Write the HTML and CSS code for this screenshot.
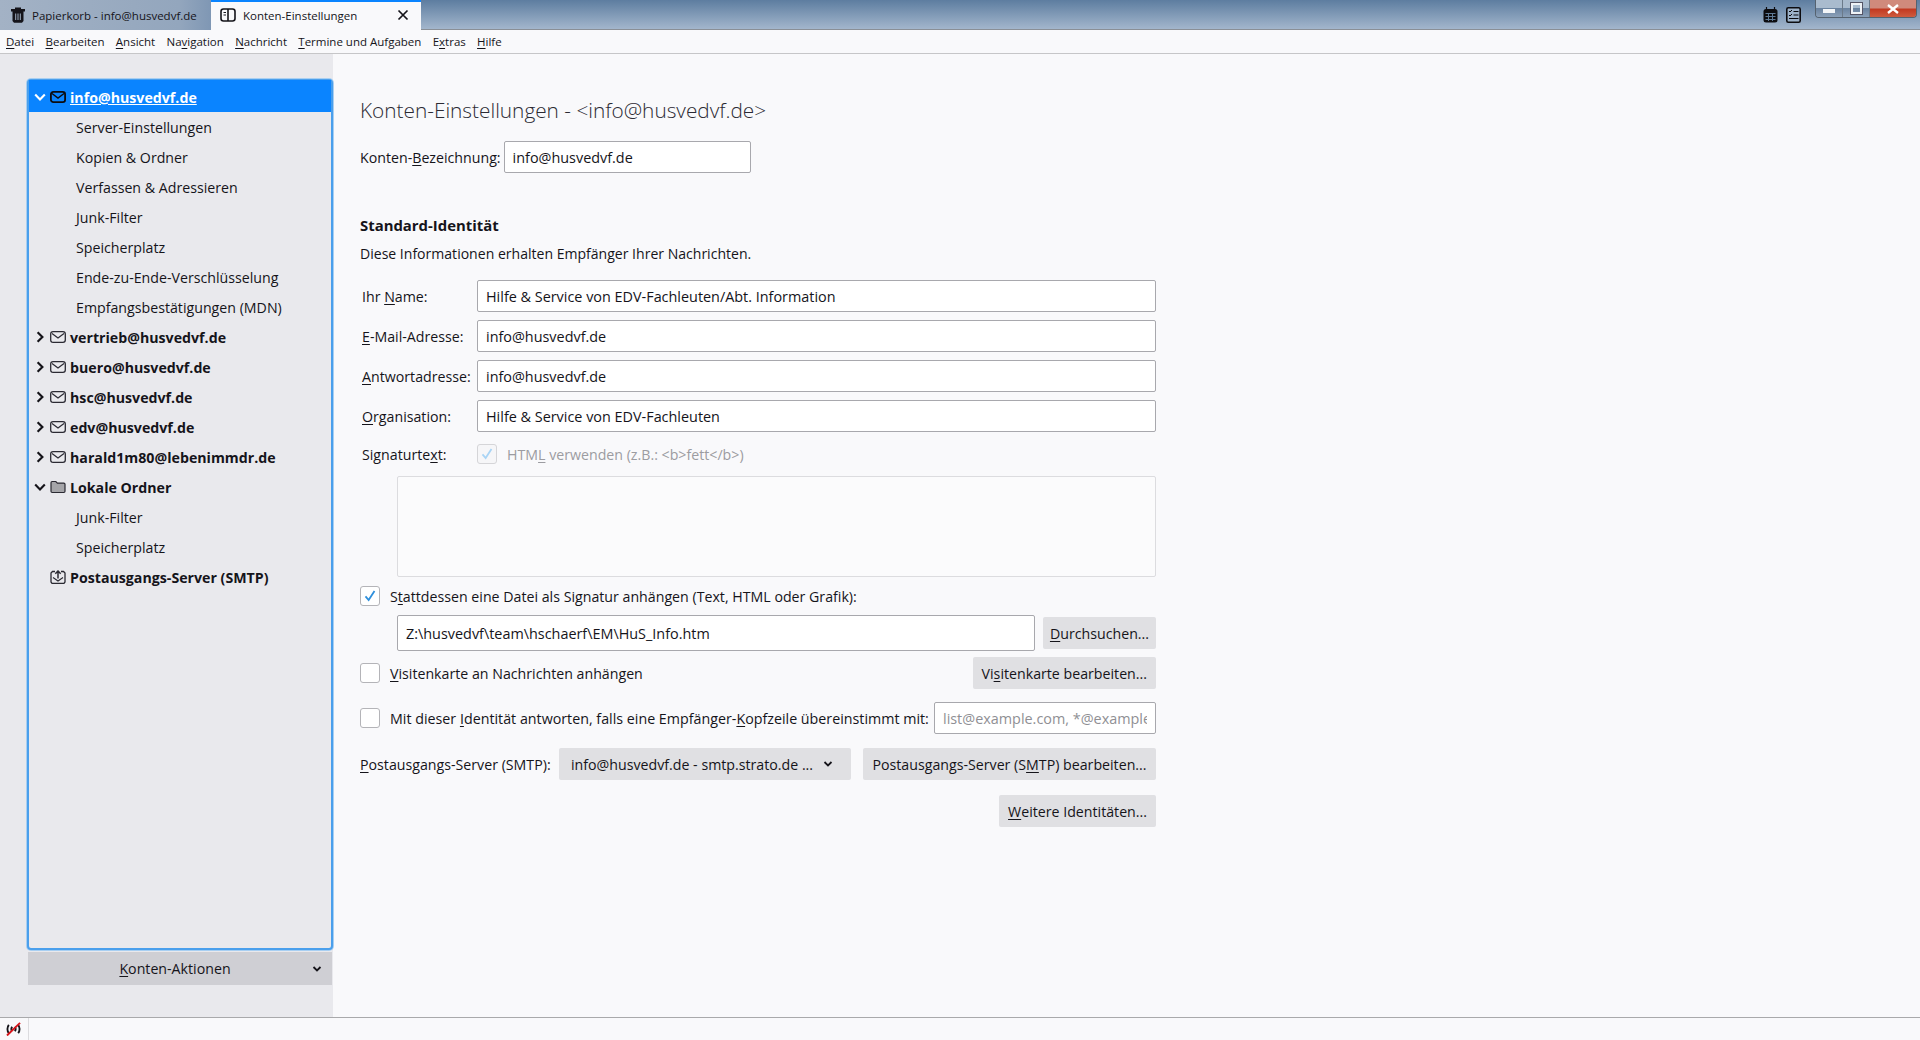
FILE: index.html
```html
<!DOCTYPE html>
<html lang="de">
<head>
<meta charset="utf-8">
<title>Konten-Einstellungen</title>
<link rel="stylesheet" href="styles.css">
</head>
<body>
<div class="app">
  <header class="titlebar">
    <div class="tab">
      <svg class="tab-icon" viewBox="0 0 16 16"><path d="M5 2V.5h6V2h4v2.500h-1.500V14l-1.500 1.700H4L2.500 14V4.500H1V2z" fill="#15141a"/><path d="M5.700 6.500v6.500M8 6.500v6.500M10.300 6.500v6.500" stroke="#a0afc2" stroke-width="1"/></svg>
      <span>Papierkorb - info@husvedvf.de</span>
    </div>
    <div class="tab tab-active">
      <svg class="tab-icon" viewBox="0 0 16 16"><rect x="1" y="2" width="14" height="12" rx="2.500" fill="none" stroke="#15141a" stroke-width="1.600"/><path d="M8 2v12" stroke="#15141a" stroke-width="1.600"/><path d="M3.500 5.500h2.500M3.500 8h2.500" stroke="#15141a" stroke-width="1.200"/></svg>
      <span class="tab-label">Konten-Einstellungen</span>
      <svg class="tab-close" viewBox="0 0 12 12"><path d="M1.500 1.500l9 9M10.500 1.500l-9 9" stroke="#15141a" stroke-width="1.700"/></svg>
    </div>
    <div class="title-spacer"></div>
    <svg class="tool-icon" viewBox="0 0 15 16"><path d="M3.500 0v3M11.500 0v3" stroke="#0c0c10" stroke-width="1.200"/><rect x="0.500" y="2" width="14" height="13.500" rx="2.500" fill="#0c0c10"/><path d="M2.500 6.500h10M2.500 9.500h10M2.500 12.500h10M5.500 6v8M9.500 6v8" stroke="#5d7894" stroke-width="1"/></svg>
    <svg class="tool-icon tool-task" viewBox="0 0 15 16"><rect x="0.800" y="0.800" width="13.400" height="14.400" rx="1.500" fill="#9db2c9" stroke="#0c0c10" stroke-width="1.600"/><path d="M3 4l1 1 2-2M3 8l1 1 2-2" stroke="#0c0c10" fill="none"/><path d="M7.500 4.500h5M7.500 8h5M3 11.500h9.500" stroke="#0c0c10" stroke-width="1.200"/></svg>
    <div class="winctl">
      <div class="wbtn wbtn-min"><i></i></div>
      <div class="wbtn wbtn-max"><i></i></div>
      <div class="wbtn wbtn-close"><svg viewBox="0 0 14 10" width="14" height="10"><path d="M2 1l10 8M12 1L2 9" stroke="#fff" stroke-width="2.400"/></svg></div>
    </div>
  </header>

  <nav class="menubar">
    <span><u>D</u>atei</span><span><u>B</u>earbeiten</span><span><u>A</u>nsicht</span><span>Na<u>v</u>igation</span><span><u>N</u>achricht</span><span><u>T</u>ermine und Aufgaben</span><span>E<u>x</u>tras</span><span><u>H</u>ilfe</span>
  </nav>

  <div class="body">
    <aside class="sidebar">
      <div class="tree">
        <div class="row row-selected">
          <svg class="chev" viewBox="0 0 10 10"><path d="M1 3l4 4 4-4" fill="none" stroke="#fff" stroke-width="1.800"/></svg>
          <svg class="ico" viewBox="0 0 16 12"><rect x="0.900" y="0.900" width="14.200" height="10.200" rx="2.400" fill="none" stroke="#0c0c10" stroke-width="1.800"/><path d="M2 2.500l6 4.500 6-4.500" fill="none" stroke="#0c0c10" stroke-width="1.400"/></svg>
          <span class="acct acct-link">info@husvedvf.de</span>
        </div>
        <div class="row sub">Server-Einstellungen</div>
        <div class="row sub">Kopien &amp; Ordner</div>
        <div class="row sub">Verfassen &amp; Adressieren</div>
        <div class="row sub">Junk-Filter</div>
        <div class="row sub">Speicherplatz</div>
        <div class="row sub">Ende-zu-Ende-Verschlüsselung</div>
        <div class="row sub">Empfangsbestätigungen (MDN)</div>
        <div class="row">
          <svg class="chev" viewBox="0 0 10 10"><path d="M3 1l4 4-4 4" fill="none" stroke="#15141a" stroke-width="1.800"/></svg>
          <svg class="ico" viewBox="0 0 16 12"><rect x="0.700" y="0.700" width="14.600" height="10.600" rx="2.400" fill="none" stroke="#2b2a33" stroke-width="1.300"/><path d="M2 2.500l6 4.500 6-4.500" fill="none" stroke="#2b2a33" stroke-width="1.200"/></svg>
          <span class="acct">vertrieb@husvedvf.de</span>
        </div>
        <div class="row">
          <svg class="chev" viewBox="0 0 10 10"><path d="M3 1l4 4-4 4" fill="none" stroke="#15141a" stroke-width="1.800"/></svg>
          <svg class="ico" viewBox="0 0 16 12"><rect x="0.700" y="0.700" width="14.600" height="10.600" rx="2.400" fill="none" stroke="#2b2a33" stroke-width="1.300"/><path d="M2 2.500l6 4.500 6-4.500" fill="none" stroke="#2b2a33" stroke-width="1.200"/></svg>
          <span class="acct">buero@husvedvf.de</span>
        </div>
        <div class="row">
          <svg class="chev" viewBox="0 0 10 10"><path d="M3 1l4 4-4 4" fill="none" stroke="#15141a" stroke-width="1.800"/></svg>
          <svg class="ico" viewBox="0 0 16 12"><rect x="0.700" y="0.700" width="14.600" height="10.600" rx="2.400" fill="none" stroke="#2b2a33" stroke-width="1.300"/><path d="M2 2.500l6 4.500 6-4.500" fill="none" stroke="#2b2a33" stroke-width="1.200"/></svg>
          <span class="acct">hsc@husvedvf.de</span>
        </div>
        <div class="row">
          <svg class="chev" viewBox="0 0 10 10"><path d="M3 1l4 4-4 4" fill="none" stroke="#15141a" stroke-width="1.800"/></svg>
          <svg class="ico" viewBox="0 0 16 12"><rect x="0.700" y="0.700" width="14.600" height="10.600" rx="2.400" fill="none" stroke="#2b2a33" stroke-width="1.300"/><path d="M2 2.500l6 4.500 6-4.500" fill="none" stroke="#2b2a33" stroke-width="1.200"/></svg>
          <span class="acct">edv@husvedvf.de</span>
        </div>
        <div class="row">
          <svg class="chev" viewBox="0 0 10 10"><path d="M3 1l4 4-4 4" fill="none" stroke="#15141a" stroke-width="1.800"/></svg>
          <svg class="ico" viewBox="0 0 16 12"><rect x="0.700" y="0.700" width="14.600" height="10.600" rx="2.400" fill="none" stroke="#2b2a33" stroke-width="1.300"/><path d="M2 2.500l6 4.500 6-4.500" fill="none" stroke="#2b2a33" stroke-width="1.200"/></svg>
          <span class="acct">harald1m80@lebenimmdr.de</span>
        </div>
        <div class="row">
          <svg class="chev" viewBox="0 0 10 10"><path d="M1 3l4 4 4-4" fill="none" stroke="#15141a" stroke-width="1.800"/></svg>
          <svg class="ico ico-folder" viewBox="0 0 16 13"><path d="M1 3V2.200C1 1.500 1.500 1 2.200 1h3.600l1.600 1.600h6.400c.7 0 1.200.5 1.200 1.200v7c0 .7-.5 1.200-1.200 1.200H2.200C1.500 12 1 11.500 1 10.800z" fill="#a5a5a9" stroke="#2b2a33" stroke-width="1.200"/></svg>
          <span class="acct">Lokale Ordner</span>
        </div>
        <div class="row sub">Junk-Filter</div>
        <div class="row sub">Speicherplatz</div>
        <div class="row">
          <span class="chev"></span>
          <svg class="ico ico-folder" viewBox="0 0 16 14"><path d="M5 1.500H2.500l-1.500 1.500v9l1 1.300h12l1-1.300v-9l-1.500-1.500H11" fill="none" stroke="#2b2a33" stroke-width="1.300"/><path d="M8 8.500V1M5.300 3.700L8 1l2.700 2.700" fill="none" stroke="#2b2a33" stroke-width="1.500"/><path d="M3 7.500l5 3.500 5-3.500" fill="none" stroke="#2b2a33" stroke-width="1.100"/></svg>
          <span class="acct">Postausgangs-Server (SMTP)</span>
        </div>
      </div>
      <div class="actions">
        <span class="actions-label"><u>K</u>onten-Aktionen</span>
        <svg class="actions-chev" viewBox="0 0 10 8"><path d="M1.500 2l3.500 3.500L8.500 2" fill="none" stroke="#15141a" stroke-width="1.800"/></svg>
      </div>
    </aside>

    <main class="content">
      <h1 class="heading">Konten-Einstellungen - &lt;info@husvedvf.de&gt;</h1>
      <div class="line line-name">
        <label class="lbl">Konten-<u>B</u>ezeichnung:</label>
        <input class="field field-name" type="text" value="info@husvedvf.de">
      </div>

      <h2 class="section">Standard-Identität</h2>
      <p class="desc">Diese Informationen erhalten Empfänger Ihrer Nachrichten.</p>

      <div class="idgrid">
        <label class="glbl">Ihr <u>N</u>ame:</label><input class="field" type="text" value="Hilfe &amp; Service von EDV-Fachleuten/Abt. Information">
        <label class="glbl"><u>E</u>-Mail-Adresse:</label><input class="field" type="text" value="info@husvedvf.de">
        <label class="glbl"><u>A</u>ntwortadresse:</label><input class="field" type="text" value="info@husvedvf.de">
        <label class="glbl"><u>O</u>rganisation:</label><input class="field" type="text" value="Hilfe &amp; Service von EDV-Fachleuten">
      </div>

      <div class="sigline">
        <label class="glbl">Signaturte<u>x</u>t:</label>
        <span class="check check-disabled"><svg viewBox="0 0 20 20"><path d="M5 10.500l3.500 4L15 4.500" fill="none" stroke="#a9d4f5" stroke-width="2"/></svg></span>
        <span class="disabled-text">HTM<u>L</u> verwenden (z.B.: &lt;b&gt;fett&lt;/b&gt;)</span>
      </div>
      <div class="sigbox"></div>

      <div class="line line-check1">
        <span class="check"><svg viewBox="0 0 20 20"><path d="M5 10.500l3.500 4L15 4.500" fill="none" stroke="#2e8fdc" stroke-width="2"/></svg></span>
        <span>S<u>t</u>attdessen eine Datei als Signatur anhängen (Text, HTML oder Grafik):</span>
      </div>
      <div class="line line-file">
        <input class="field field-file" type="text" value="Z:\husvedvf\team\hschaerf\EM\HuS_Info.htm">
        <button class="btn" type="button"><u>D</u>urchsuchen...</button>
      </div>
      <div class="line line-card">
        <span class="check"></span>
        <span class="grow"><u>V</u>isitenkarte an Nachrichten anhängen</span>
        <button class="btn" type="button">Vi<u>s</u>itenkarte bearbeiten...</button>
      </div>
      <div class="line line-reply">
        <span class="check"></span>
        <span class="grow">Mit dieser <u>I</u>dentität antworten, falls eine Empfänger-<u>K</u>opfzeile übereinstimmt mit:</span>
        <input class="field field-reply" type="text" placeholder="list@example.com, *@example.com">
      </div>
      <div class="line line-smtp">
        <label class="lbl lbl-smtp"><u>P</u>ostausgangs-Server (SMTP):</label>
        <div class="btn select"><span class="grow">info@husvedvf.de - smtp.strato.de ...</span><svg class="sel-chev" viewBox="0 0 10 8"><path d="M1.500 2l3.500 3.500L8.500 2" fill="none" stroke="#15141a" stroke-width="1.800"/></svg></div>
        <button class="btn" type="button">Postausgangs-Server (S<u>M</u>TP) bearbeiten...</button>
      </div>
      <div class="line line-more">
        <button class="btn" type="button"><u>W</u>eitere Identitäten...</button>
      </div>
    </main>
  </div>

  <footer class="statusbar">
    <div class="status-cell">
      <svg viewBox="0 0 18 15" width="17" height="14"><path d="M4 3C2 5.500 2 9.500 4 12M14 3c2 2.500 2 6.500 0 9M7.500 5c-1 1.500-1 3.500 0 5M10.500 5c1 1.500 1 3.500 0 5" fill="none" stroke="#15141a" stroke-width="2"/><path d="M2 14.500L16 1" stroke="#d7141a" stroke-width="2"/></svg>
    </div>
  </footer>
</div>
</body>
</html>
```
FILE: styles.css
```css
* { box-sizing: border-box; }
html, body { margin: 0; height: 100%; }
body {
  font-family: "Open Sans", "Noto Sans", sans-serif;
  font-size: 14.2px;
  color: #15141a;
  background: #f9f9fb;
  overflow: hidden;
}
u { text-underline-offset: 2px; text-decoration-thickness: 1px; }
.app { display: flex; flex-direction: column; height: 1040px; }

.titlebar {
  height: 30px;
  flex: none;
  display: flex;
  align-items: flex-start;
  background: linear-gradient(#5d7da0, #a3b6cc);
  border-bottom: 1px solid #8a8f96;
}
.tab {
  width: 211px;
  height: 30px;
  display: flex;
  align-items: center;
  gap: 6px;
  padding-left: 10px;
  font-size: 11.500px;
  background: linear-gradient(90deg, #a3b2c5, #93a6bd 85%, #7f97b4);
}
.tab-active {
  width: 210px;
  background: #f9f9fb;
  border-top: 2px solid #0a84ff;
  padding-left: 9px;
  padding-bottom: 2px;
}
.tab-icon { width: 16px; height: 16px; flex: none; }
.tab-label { flex: 1; margin-left: 1px; }
.tab-close { width: 12px; height: 12px; margin-right: 12px; flex: none; }
.title-spacer { flex: 1; }
.tool-icon { width: 15px; height: 16px; margin-top: 7px; margin-right: 8px; flex: none; }
.tool-task { margin-right: 14px; }
.winctl {
  display: flex;
  width: 102px;
  height: 18px;
  margin-right: 3px;
  border: 1px solid #55626f;
  border-top: 0;
  border-radius: 0 0 4px 4px;
  overflow: hidden;
}
.wbtn {
  display: flex;
  align-items: center;
  justify-content: center;
  border-right: 1px solid #6b7a8a;
  width: 27px;
  background: linear-gradient(#a9bbce 0 50%, #6a83a0 50%, #8ba0b8);
}
.wbtn-min i { width: 12px; height: 4px; background: #f2f5f8; margin-top: 4px; }
.wbtn-max i { width: 11px; height: 11px; border: 2px solid #eef2f6; outline: 1px solid #556; }
.wbtn-close {
  flex: 1;
  border-right: 0;
  background: linear-gradient(#d08a7c 0 45%, #c23a22 55%, #cf5b3f);
}

.menubar {
  height: 24px;
  flex: none;
  display: flex;
  align-items: center;
  gap: 11.300px;
  padding: 0 0 1px 6px;
  font-size: 11.500px;
  background: #f9f9fb;
  border-bottom: 1px solid #c6c6c8;
}

.body { flex: 1; display: flex; min-height: 0; }

.sidebar {
  width: 333px;
  flex: none;
  background: #e9e9ed;
  padding: 25px 0 32px 27px;
  display: flex;
  flex-direction: column;
}
.tree {
  height: 871px;
  border: 2px solid #4a9fec;
  border-radius: 4px;
  background: #e9e9ed;
  box-shadow: 0 0 0 1px #a8cff2;
  flex: none;
}
.row {
  height: 30px;
  display: flex;
  align-items: center;
  padding-left: 5px;
}
.row-selected {
  height: 32px;
  background: #0a84ff;
  color: #fff;
  margin-top: -1px;
  padding-top: 2px;
}
.sub { padding-left: 47px; }
.chev { width: 12px; height: 12px; flex: none; display: block; }
.ico { width: 16px; height: 12px; margin-left: 4px; flex: none; }
.ico-folder { height: 14px; }
.acct { font-weight: 700; margin-left: 4px; font-size: 14.200px; letter-spacing: 0; }
.acct-link { text-decoration: underline; }

.actions {
  width: 304px;
  height: 33px;
  margin: 2px 0 0 1px;
  background: #cfcfd4;
  display: flex;
  align-items: center;
  flex: none;
}
.actions-label { flex: 1; text-align: center; padding-left: 10px; }
.actions-chev { width: 10px; height: 8px; margin-right: 10px; }

.content { flex: 1; padding: 36px 0 0 27px; }
.content > * { width: 796px; }
.heading {
  font-size: 20.800px;
  font-weight: 300;
  line-height: 40px;
  margin: 0;
  color: #2b2a33;
}
.line { display: flex; align-items: center; }
.line-name { height: 32px; margin-top: 11px; }
.lbl { margin-right: 3px; }
.field {
  height: 32px;
  border: 1px solid #a8a8ad;
  border-radius: 2px;
  background: #fff;
  font: inherit;
  font-size: 14.400px;
  color: #15141a;
  padding: 0 8px;
  outline: 0;
  min-width: 0;
}
.field::placeholder { color: #8f8f94; opacity: 1; }
.field-name { width: 247px; }
.section {
  font-size: 14.900px;
  font-weight: 700;
  line-height: 24px;
  margin: 40px 0 0;
}
.desc { margin: 7px 0 0; line-height: 20px; font-size: 14.050px; }
.idgrid {
  display: grid;
  grid-template-columns: 117px 1fr;
  row-gap: 8px;
  margin-top: 16px;
  align-items: center;
}
.idgrid .field { width: 100%; }
.glbl { padding-left: 2px; }
.sigline {
  display: flex;
  align-items: center;
  height: 24px;
  margin-top: 10px;
}
.sigline .glbl { width: 117px; flex: none; }
.disabled-text { color: #9c9ca1; margin-left: 10px; }
.check {
  width: 20px;
  height: 20px;
  flex: none;
  display: block;
  background: #fff;
  border: 1px solid #b4b4b8;
  border-radius: 3px;
}
.check svg { display: block; width: 18px; height: 18px; }
.check-disabled { background: #f6f6f8; border-color: #d5d5d8; }
.sigbox {
  margin: 10px 0 0 37px;
  width: 759px !important;
  height: 101px;
  background: #fbfbfc;
  border: 1px solid #dcdcdf;
  border-radius: 2px;
}
.line-check1 { height: 20px; margin-top: 9px; gap: 10px; }
.line-file { height: 36px; margin-top: 9px; padding-left: 37px; gap: 8px; }
.field-file { width: 638px; height: 36px; flex: none; }
.btn {
  height: 32px;
  border: 0;
  border-radius: 2px;
  background: #e0e0e3;
  color: #15141a;
  font: inherit;
  padding: 0 9px;
  white-space: nowrap;
}
.line-file .btn { flex: 1; min-width: 0; padding: 0; }
.grow { flex: 1; }
.line-card { height: 32px; margin-top: 6px; gap: 10px; }
.line-reply { height: 32px; margin-top: 13px; }
.line-reply .check { margin-right: 10px; }
.line-reply .grow { min-width: 0; white-space: nowrap; font-size: 14.280px; }
.field-reply { width: 222px; flex: none; }
.line-smtp { height: 32px; margin-top: 14px; }
.lbl-smtp { width: 199px; flex: none; margin: 0; white-space: nowrap; }
.select {
  width: 292px;
  flex: none;
  display: flex;
  align-items: center;
  padding: 0 18px 0 12px;
  margin-right: 12px;
}
.sel-chev { width: 10px; height: 8px; }
.line-smtp .btn:last-child { flex: 1; min-width: 0; padding: 0; }
.line-more { height: 32px; margin-top: 15px; justify-content: flex-end; }

.statusbar {
  height: 23px;
  flex: none;
  background: #f9f9fb;
  border-top: 1px solid #a9a9ab;
}
.status-cell {
  width: 29px;
  height: 22px;
  border-right: 1px solid #dcdcdf;
  display: flex;
  align-items: center;
  justify-content: center;
  padding-right: 1px;
}
```
